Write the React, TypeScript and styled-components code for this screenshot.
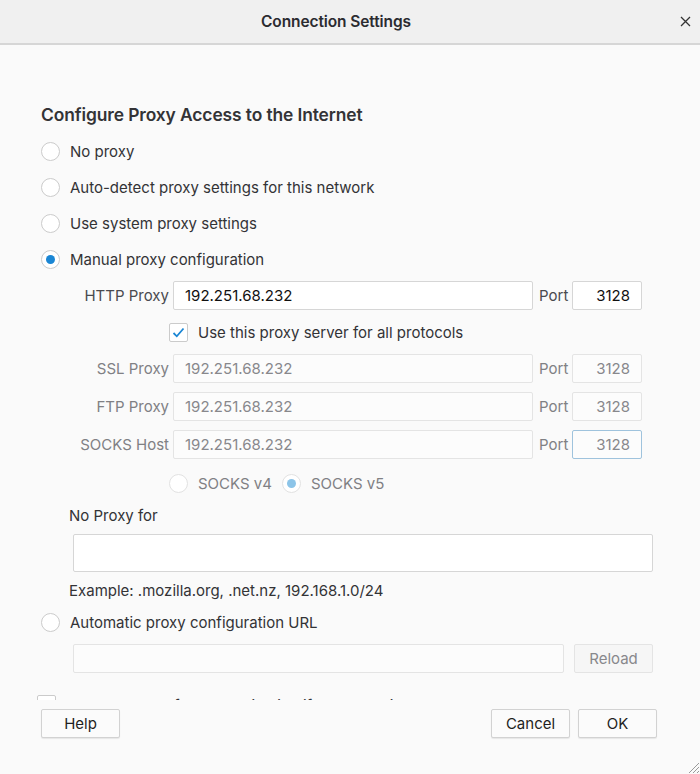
import React from 'react';
import styled, { createGlobalStyle, css } from 'styled-components';

const GlobalStyle = createGlobalStyle`
  html, body {
    margin: 0;
    padding: 0;
    background: #fafafa;
  }
  body {
    font-family: Inter, "Noto Sans", "Liberation Sans", sans-serif;
    color: #333336;
  }
  * {
    box-sizing: border-box;
  }
`;

const Dialog = styled.div`
  position: relative;
  width: 700px;
  height: 774px;
  display: flex;
  flex-direction: column;
  background: #fafafa;
  overflow: hidden;
`;

const TitleBar = styled.div`
  flex: none;
  height: 45px;
  display: grid;
  grid-template-columns: 1fr auto 1fr;
  align-items: center;
  background: #f0f0f0;
  border-bottom: 2px solid #d6d6d6;
`;

const Title = styled.div`
  grid-column: 2;
  margin-right: 28px;
  font-size: 15.5px;
  font-weight: 600;
  color: #2b2b30;
  letter-spacing: -0.1px;
`;

const CloseButton = styled.button`
  justify-self: end;
  margin-right: 5px;
  width: 20px;
  height: 20px;
  padding: 0;
  border: none;
  background: none;
  display: flex;
  align-items: center;
  justify-content: center;
  color: #333;
`;

const Body = styled.div`
  flex: 1;
  overflow: hidden;
  padding: 58px 47px 0 41px;
`;

const Heading = styled.h2`
  margin: 0 0 6px;
  font-size: 17.4px;
  line-height: 24px;
  font-weight: 600;
  color: #333336;
  letter-spacing: -0.1px;
`;

const RadioRow = styled.label`
  height: 36px;
  display: flex;
  align-items: center;
  gap: 10px;
  font-size: 15px;
  color: #333336;
`;

const RadioCircle = styled.span<{ $checked?: boolean; $disabled?: boolean }>`
  position: relative;
  flex: none;
  width: 19px;
  height: 19px;
  border-radius: 50%;
  background: #fff;
  border: 1px solid ${(p) => (p.$disabled ? '#e2e2e2' : '#cbcbcb')};
  ${(p) =>
    p.$checked &&
    css`
      &::after {
        content: '';
        position: absolute;
        left: 4px;
        top: 4px;
        width: 9px;
        height: 9px;
        border-radius: 50%;
        background: ${p.$disabled ? '#8cc4e8' : '#1a86d4'};
      }
    `}
`;

const FieldsGrid = styled.div`
  margin-top: 4px;
  display: grid;
  grid-template-columns: 132px 360px 39px 70px;
  grid-template-rows: 29px 26px 29px 29px 29px 30px;
  row-gap: 9px;
  align-items: center;
`;

const FieldLabel = styled.span<{ $disabled?: boolean }>`
  text-align: right;
  padding-right: 4px;
  font-size: 15px;
  color: ${(p) => (p.$disabled ? '#808084' : '#4a4a4f')};
`;

const PortLabel = styled(FieldLabel)`
  text-align: left;
  padding: 0 0 0 6px;
`;

const TextField = styled.input<{ $focused?: boolean }>`
  width: 100%;
  height: 29px;
  margin: 0;
  padding: 0 10px 0 11px;
  font-family: inherit;
  font-size: 15px;
  color: #111;
  background: #fff;
  border: 1px solid ${(p) => (p.$focused ? '#9fc3dd' : '#d6d6d6')};
  border-radius: 2px;
  outline: none;

  &:disabled {
    color: #88888c;
    background: #fcfcfc;
    border-color: ${(p) => (p.$focused ? '#9fc3dd' : '#e4e4e4')};
  }
`;

const PortField = styled(TextField)`
  text-align: right;
  padding-right: 11px;
`;

const SubRow = styled.div`
  grid-column: 2 / -1;
  height: 100%;
  margin-left: -4px;
  display: flex;
  align-items: center;
  gap: 10px;
  font-size: 15px;
`;

const SubOption = styled.label<{ $disabled?: boolean }>`
  display: flex;
  align-items: center;
  gap: 10px;
  color: ${(p) => (p.$disabled ? '#808084' : '#333336')};
`;

const CheckBox = styled.span`
  flex: none;
  width: 19px;
  height: 19px;
  border: 1px solid #cbcbcb;
  border-radius: 2px;
  background: #fff;
  display: flex;
  align-items: center;
  justify-content: center;
`;

const Indented = styled.div`
  padding-left: 28px;
  margin-top: 8px;
`;

const Caption = styled.div<{ $top?: number }>`
  margin-top: ${(p) => p.$top ?? 0}px;
  height: 20px;
  line-height: 20px;
  font-size: 15px;
  color: #333336;
`;

const TextArea = styled.div`
  margin: 8px 0 0 4px;
  height: 38px;
  background: #fff;
  border: 1px solid #d6d6d6;
  border-radius: 2px;
`;

const AutoRow = styled(RadioRow)`
  margin-top: 3px;
`;

const ReloadRow = styled.div`
  margin: 4px 0 0 32px;
  display: flex;
  gap: 10px;
`;

const Button = styled.button<{ $disabled?: boolean }>`
  flex: none;
  width: 79px;
  height: 29px;
  margin: 0;
  padding: 0;
  font-family: inherit;
  font-size: 15px;
  color: ${(p) => (p.$disabled ? '#88888c' : '#1f1f22')};
  background: ${(p) => (p.$disabled ? '#f6f6f6' : '#fbfbfb')};
  border: 1px solid ${(p) => (p.$disabled ? '#e4e4e4' : '#d2d2d2')};
  border-radius: 2px;
  box-shadow: ${(p) => (p.$disabled ? 'none' : '0 1px 1px rgba(0,0,0,0.08)')};
`;

const ClippedRow = styled.div`
  margin: 22px 0 0 -4px;
  height: 5px;
  overflow: hidden;
  display: flex;
  align-items: flex-start;
  gap: 12px;
  font-size: 15px;
  color: #333336;
`;

const ClippedText = styled.span`
  display: block;
  height: 5px;
  overflow: hidden;
  line-height: 19px;
  margin-top: 1px;
`;

const Footer = styled.div`
  flex: none;
  height: 73px;
  padding: 8px 43px 0 41px;
  display: flex;
  align-items: flex-start;
  gap: 8px;
`;

const Spacer = styled.div`
  flex: 1;
`;

const ResizeGrip = styled.svg`
  position: absolute;
  right: 0;
  bottom: 0;
`;

const Check = () => (
  <svg width="13" height="11" viewBox="0 0 13 11">
    <path d="M1.5 6 L4.8 9.3 L11.5 1.5" fill="none" stroke="#1a86d4" strokeWidth="1.8" />
  </svg>
);

type Proxy = { label: string; disabled: boolean; focusedPort?: boolean };

const proxies: Proxy[] = [
  { label: 'SSL Proxy', disabled: true },
  { label: 'FTP Proxy', disabled: true },
  { label: 'SOCKS Host', disabled: true, focusedPort: true },
];

const App = () => {
  return (
    <Dialog>
      <GlobalStyle />
      <TitleBar>
        <Title>Connection Settings</Title>
        <CloseButton aria-label="Close">
          <svg width="11" height="11" viewBox="0 0 11 11">
            <path d="M1 1 L10 10 M10 1 L1 10" stroke="#333" strokeWidth="1.3" />
          </svg>
        </CloseButton>
      </TitleBar>

      <Body>
        <Heading>Configure Proxy Access to the Internet</Heading>
        <RadioRow>
          <RadioCircle />
          No proxy
        </RadioRow>
        <RadioRow>
          <RadioCircle />
          Auto-detect proxy settings for this network
        </RadioRow>
        <RadioRow>
          <RadioCircle />
          Use system proxy settings
        </RadioRow>
        <RadioRow>
          <RadioCircle $checked />
          Manual proxy configuration
        </RadioRow>

        <FieldsGrid>
          <FieldLabel>HTTP Proxy</FieldLabel>
          <TextField readOnly value="192.251.68.232" />
          <PortLabel>Port</PortLabel>
          <PortField readOnly value="3128" />

          <SubRow>
            <SubOption>
              <CheckBox>
                <Check />
              </CheckBox>
              Use this proxy server for all protocols
            </SubOption>
          </SubRow>

          {proxies.map((p) => (
            <React.Fragment key={p.label}>
              <FieldLabel $disabled={p.disabled}>{p.label}</FieldLabel>
              <TextField disabled={p.disabled} readOnly value="192.251.68.232" />
              <PortLabel $disabled={p.disabled}>Port</PortLabel>
              <PortField disabled={p.disabled} $focused={p.focusedPort} readOnly value="3128" />
            </React.Fragment>
          ))}

          <SubRow>
            <SubOption $disabled>
              <RadioCircle $disabled />
              SOCKS v4
            </SubOption>
            <SubOption $disabled>
              <RadioCircle $disabled $checked />
              SOCKS v5
            </SubOption>
          </SubRow>
        </FieldsGrid>

        <Indented>
          <Caption>No Proxy for</Caption>
          <TextArea />
          <Caption $top={9}>Example: .mozilla.org, .net.nz, 192.168.1.0/24</Caption>
        </Indented>

        <AutoRow>
          <RadioCircle />
          Automatic proxy configuration URL
        </AutoRow>
        <ReloadRow>
          <TextField disabled readOnly value="" />
          <Button $disabled>Reload</Button>
        </ReloadRow>

        <ClippedRow>
          <CheckBox />
          <ClippedText>Do not prompt for authentication if password is saved</ClippedText>
        </ClippedRow>
      </Body>

      <Footer>
        <Button>Help</Button>
        <Spacer />
        <Button>Cancel</Button>
        <Button>OK</Button>
      </Footer>

      <ResizeGrip width="14" height="14" viewBox="0 0 14 14">
        <path d="M13 3 L3 13 M13 7 L7 13 M13 11 L11 13" stroke="#9a9a9a" strokeWidth="1" />
      </ResizeGrip>
    </Dialog>
  );
};

export default App;
